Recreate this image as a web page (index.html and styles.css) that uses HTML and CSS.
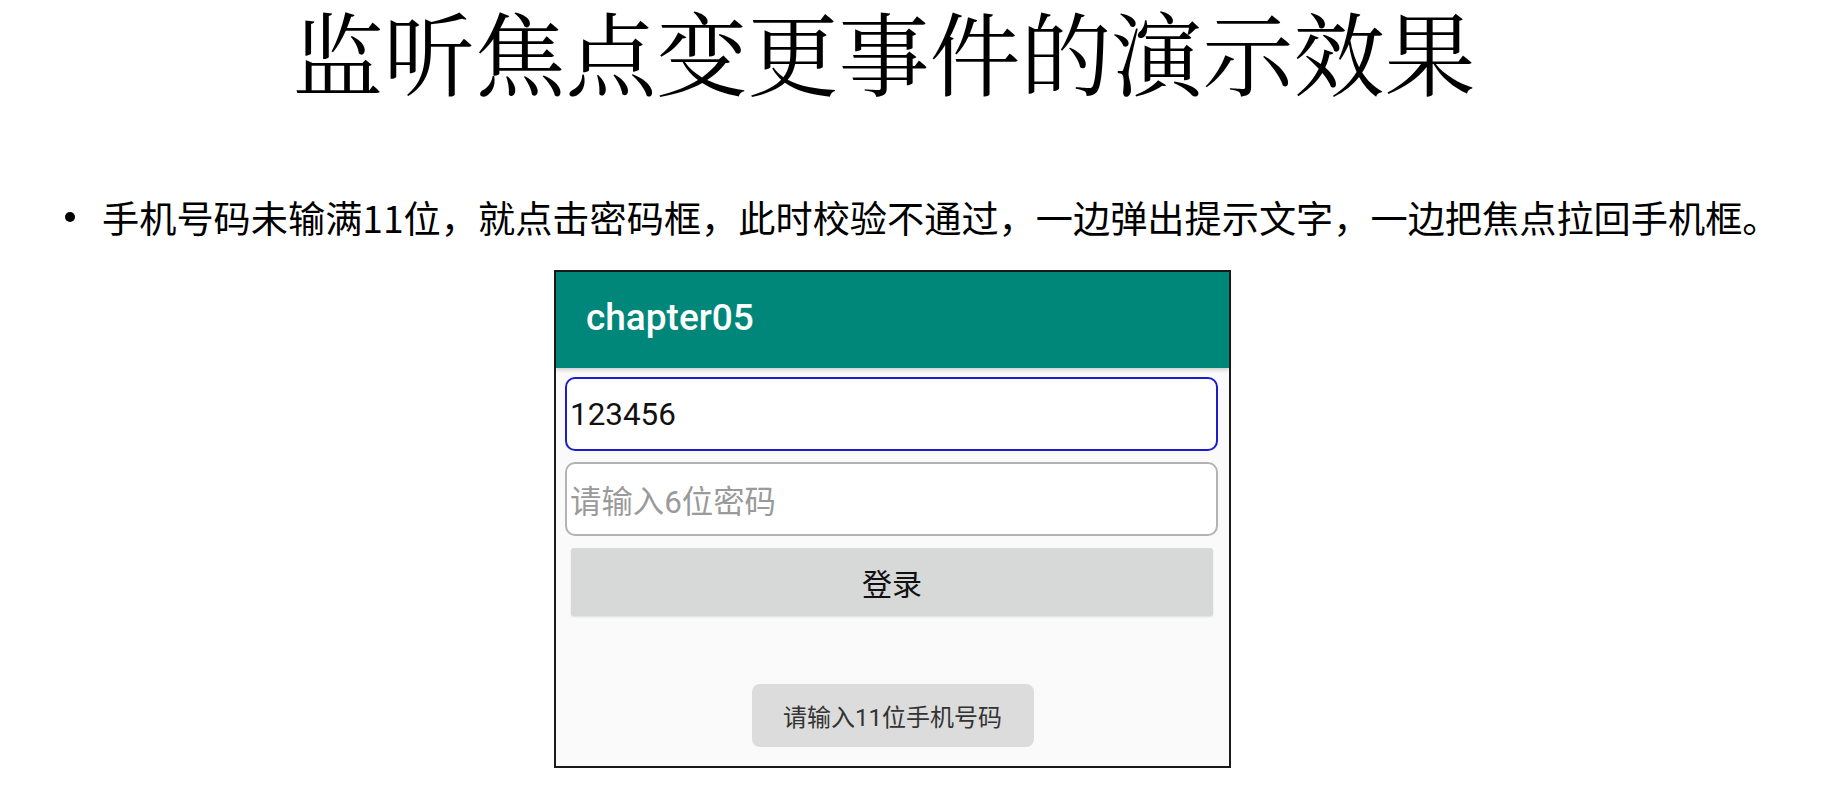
FILE: index.html
```html
<!DOCTYPE html>
<html lang="zh-CN">
<head>
<meta charset="utf-8">
<title>监听焦点变更事件的演示效果</title>
<link rel="stylesheet" href="styles.css">
</head>
<body>
<div class="slide">
  <h1 class="title">监听焦点变更事件的演示效果</h1>
  <ul class="bullets">
    <li class="bullet-item"><span class="dot"></span><span class="bullet-text">手机号码未输满11位，就点击密码框，此时校验不通过，一边弹出提示文字，一边把焦点拉回手机框。</span></li>
  </ul>
  <div class="phone">
    <div class="toolbar"><span class="toolbar-title">chapter05</span></div>
    <div class="content">
      <div class="field field-focused"><span class="field-value">123456</span></div>
      <div class="field"><span class="field-hint">请输入6位密码</span></div>
      <div class="login-btn">登录</div>
      <div class="toast">请输入11位手机号码</div>
    </div>
  </div>
</div>
</body>
</html>
```
FILE: styles.css
```css
html, body {
  margin: 0;
  padding: 0;
  background: #ffffff;
}

body {
  width: 1824px;
  height: 805px;
  overflow: hidden;
  font-family: "Noto Sans CJK SC", sans-serif;
  color: #000;
}

.slide {
  display: flex;
  flex-direction: column;
  padding-top: 2px;
}

.title {
  margin: 0;
  width: 1768px;
  height: 116px;
  margin-top: -10px;
  text-align: center;
  font-family: "Noto Serif CJK SC", "Liberation Serif", "Noto Sans CJK SC", serif;
  font-weight: 400;
  font-size: 91px;
  line-height: 116px;
  white-space: nowrap;
}

.bullets {
  list-style: none;
  margin: 0;
  padding: 0;
  margin-top: 89px;
}

.bullet-item {
  display: flex;
  align-items: center;
  height: 40px;
}

.dot {
  width: 10px;
  height: 10px;
  border-radius: 50%;
  background: #000;
  margin-left: 65px;
  margin-right: 27px;
}

.bullet-text {
  font-family: "Noto Sans CJK SC", sans-serif;
  font-size: 37.2px;
  line-height: 40px;
  white-space: nowrap;
  font-weight: 400;
}

.phone {
  margin-top: 33px;
  margin-left: 554px;
  width: 673px;
  height: 494px;
  border: 2px solid #1a1a1a;
  background: #fafafa;
  display: flex;
  flex-direction: column;
}

.toolbar {
  height: 96px;
  background: #00877a;
  display: flex;
  align-items: center;
  padding-left: 30px;
  box-shadow: 0 2px 4px rgba(0, 0, 0, 0.18);
  position: relative;
  z-index: 1;
}

.toolbar-title {
  font-family: "Roboto", "Noto Sans CJK SC", sans-serif;
  font-weight: 500;
  font-size: 37px;
  color: #ffffff;
  margin-top: -6px;
}

.content {
  flex: 1;
  display: flex;
  flex-direction: column;
  padding: 9px 11px 19px 9px;
}

.field {
  height: 70px;
  border: 2px solid #b3b3b3;
  border-radius: 10px;
  background: #ffffff;
  display: flex;
  align-items: center;
  padding-left: 3px;
  margin-bottom: 11px;
}

.field-focused {
  border-color: #1c1ccc;
}

.field-value {
  font-family: "Roboto", "Noto Sans CJK SC", sans-serif;
  font-size: 31.4px;
  color: #111;
}

.field-hint {
  font-family: "Roboto", "Noto Sans CJK SC", sans-serif;
  font-size: 31.4px;
  color: #9a9a9a;
}

.login-btn {
  margin: 1px 5px 0 6px;
  height: 68px;
  background: #d7d8d8;
  border-radius: 3px;
  box-shadow: 0 1px 2px rgba(0, 0, 0, 0.12);
  display: flex;
  align-items: center;
  justify-content: center;
  font-family: "Roboto", "Noto Sans CJK SC", sans-serif;
  font-size: 30px;
  color: #111;
}

.toast {
  margin-top: auto;
  align-self: center;
  width: 282px;
  height: 63px;
  box-sizing: border-box;
  background: #dcdcdc;
  border-radius: 8px;
  display: flex;
  align-items: center;
  justify-content: center;
  font-family: "Roboto", "Noto Sans CJK SC", sans-serif;
  font-size: 24px;
  color: #333;
  margin-left: 2px;
}
```
